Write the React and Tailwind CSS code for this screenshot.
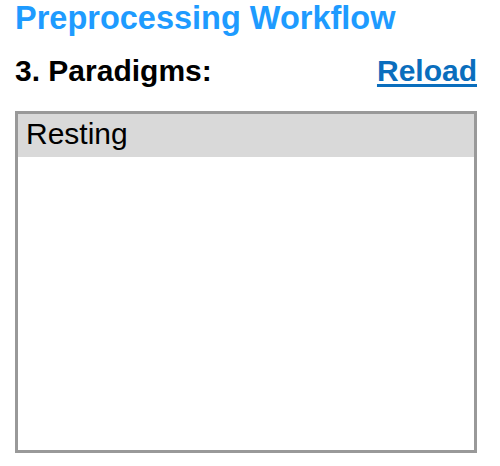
import React from 'react';

const paradigms = ['Resting'];

const App = () => {
  return (
    <div className="w-[500px] h-[466px] bg-white pl-[15px] font-['Liberation_Sans',Arial,sans-serif]">
      <h1 className="text-[32.5px] leading-[37px] font-bold text-[#1e9bff]">
        Preprocessing Workflow
      </h1>
      <div className="mt-[18px] w-[462px] flex items-baseline justify-between text-[30px] leading-[32px] font-bold">
        <span className="text-black">3. Paradigms:</span>
        <a href="#" className="text-[#0a6ebd] underline underline-offset-[3px] decoration-[3px]">
          Reload
        </a>
      </div>
      {/* Paradigm list */}
      <div className="mt-[24px] h-[342px] w-[462px] border-[3px] border-[#999999] bg-white">
        {paradigms.map((p) => (
          <div
            key={p}
            className="bg-[#d9d9d9] pl-[8px] pt-[4px] pb-[7px] text-[30px] leading-[32px] text-black"
          >
            {p}
          </div>
        ))}
      </div>
    </div>
  );
};

export default App;
